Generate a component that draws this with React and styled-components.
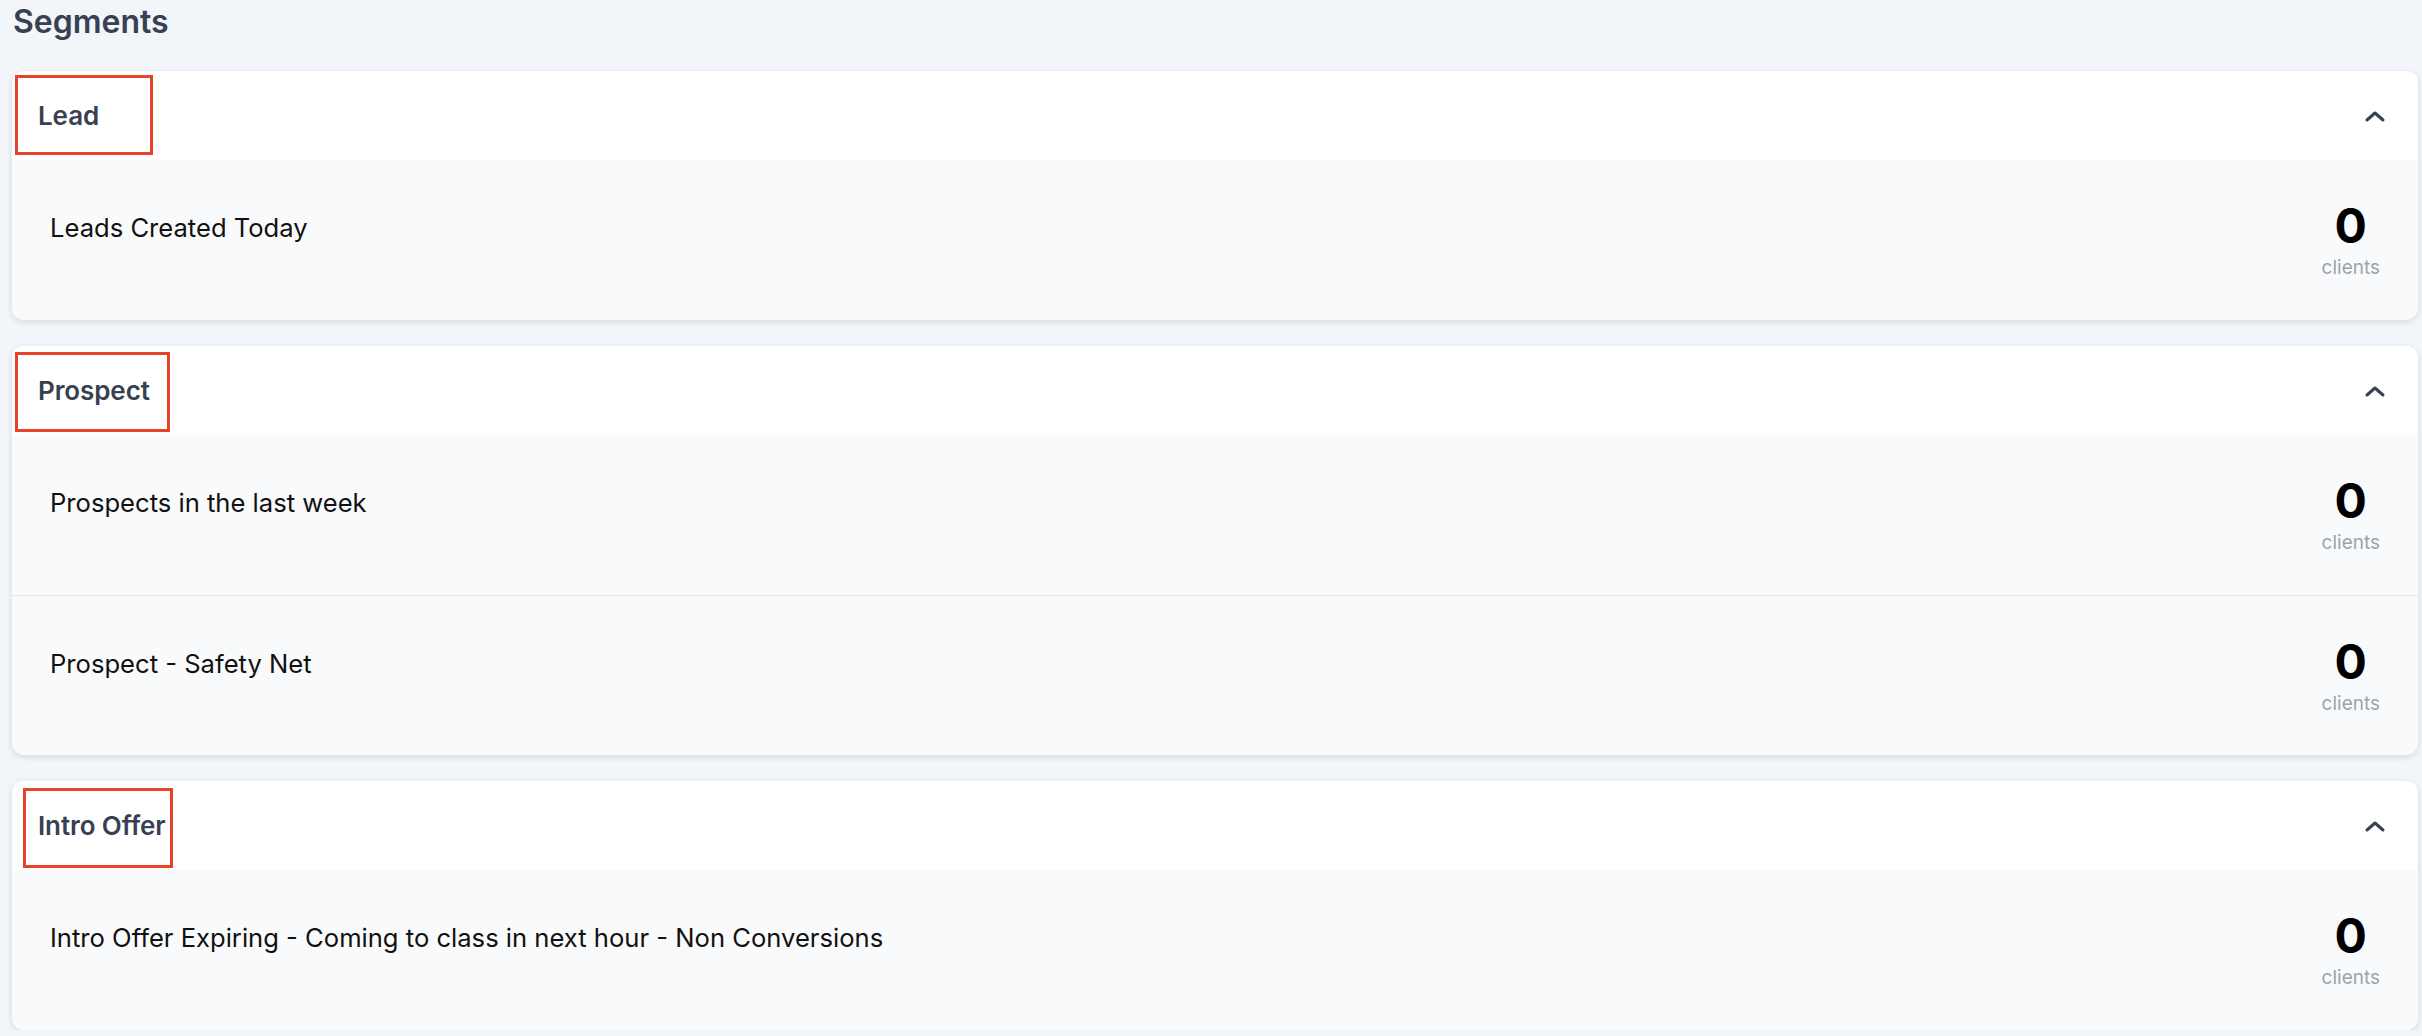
import React from "react";
import styled, { createGlobalStyle } from "styled-components";

const GlobalStyle = createGlobalStyle`
  * {
    box-sizing: border-box;
  }
  body {
    margin: 0;
    background: #f2f5f9;
    font-family: Inter, "Noto Sans", "Liberation Sans", sans-serif;
  }
`;

const segments = [
  {
    title: "Lead",
    mark: { left: 3, top: 4, width: 138, height: 80 },
    items: [{ label: "Leads Created Today", count: 0 }],
  },
  {
    title: "Prospect",
    mark: { left: 3, top: 6, width: 155, height: 80 },
    items: [
      { label: "Prospects in the last week", count: 0 },
      { label: "Prospect - Safety Net", count: 0 },
    ],
  },
  {
    title: "Intro Offer",
    mark: { left: 11, top: 7, width: 150, height: 80 },
    items: [
      {
        label:
          "Intro Offer Expiring - Coming to class in next hour - Non Conversions",
        count: 0,
      },
    ],
  },
];

const Page = styled.div`
  padding: 3px 4px 0 12px;
`;

const Heading = styled.h1`
  margin: 0 0 30px 1px;
  font-size: 32px;
  line-height: 38px;
  font-weight: 600;
  color: #374151;
`;

const List = styled.div`
  display: flex;
  flex-direction: column;
  gap: 26px;
`;

const Card = styled.section`
  position: relative;
  background: #f9fafb;
  border-radius: 12px;
  box-shadow: 0 2px 7px rgba(17, 24, 39, 0.12);
  overflow: hidden;
`;

const Header = styled.div`
  height: 89px;
  display: flex;
  align-items: center;
  justify-content: space-between;
  padding: 0 32px 0 26px;
  background: #ffffff;
`;

const Title = styled.h2`
  margin: 0;
  font-size: 26px;
  font-weight: 600;
  color: #374151;
  letter-spacing: -0.1px;
`;

// red annotation frame drawn over the screenshot title
const Mark = styled.div`
  position: absolute;
  border: 3px solid #e8432a;
  pointer-events: none;
`;

const Toggle = styled.button`
  display: flex;
  align-items: center;
  justify-content: center;
  padding: 0;
  border: none;
  background: none;
  cursor: pointer;
`;

const Row = styled.div`
  display: flex;
  justify-content: space-between;
  align-items: flex-start;
  height: 160px;
  padding: 42px 38px 0 38px;
  border-top: ${(p) => (p.$first ? "none" : "1px solid #e5e7eb")};
`;

const Label = styled.div`
  margin-top: 11px;
  font-size: 25.6px;
  line-height: 30px;
  color: #111111;
`;

const Stat = styled.div`
  display: flex;
  flex-direction: column;
  align-items: center;
`;

const Count = styled.div`
  font-size: 48px;
  line-height: 48px;
  font-weight: 650;
  color: #000000;
  margin-bottom: 7px;
`;

const Unit = styled.div`
  font-size: 19px;
  line-height: 22px;
  color: #9ca3af;
`;

const ChevronUp = () => (
  <svg width="22" height="14" viewBox="0 0 22 14" fill="none">
    <polyline
      points="3,11 11,4 19,11"
      stroke="#374151"
      strokeWidth="3"
      strokeLinecap="round"
      strokeLinejoin="round"
    />
  </svg>
);

const Segment = ({ title, mark, items }) => (
  <Card>
    <Header>
      <Title>{title}</Title>
      <Toggle aria-label="Collapse">
        <ChevronUp />
      </Toggle>
    </Header>
    <Mark
      style={{
        left: mark.left,
        top: mark.top,
        width: mark.width,
        height: mark.height,
      }}
    />
    {items.map((item, i) => (
      <Row key={item.label} $first={i === 0}>
        <Label>{item.label}</Label>
        <Stat>
          <Count>{item.count}</Count>
          <Unit>clients</Unit>
        </Stat>
      </Row>
    ))}
  </Card>
);

const App = () => (
  <>
    <GlobalStyle />
    <Page>
      <Heading>Segments</Heading>
      <List>
        {segments.map((s) => (
          <Segment key={s.title} {...s} />
        ))}
      </List>
    </Page>
  </>
);

export default App;
